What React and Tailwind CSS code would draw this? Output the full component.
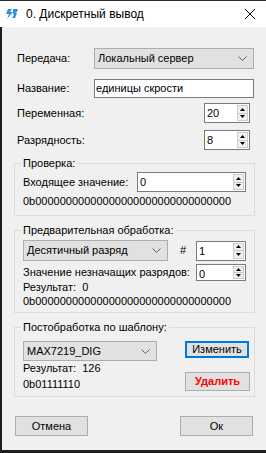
import React from 'react';

// WinForms-ish dialog "Дискретный вывод"
const font = "font-['Liberation_Sans',Arial,sans-serif]";

const Arrow = ({ up }) => (
  <svg width="5" height="3" viewBox="0 0 5 3">
    <path d={up ? 'M0 3 L2.5 0 L5 3 Z' : 'M0 0 L2.5 3 L5 0 Z'} fill="#000" />
  </svg>
);

const Spin = ({ value, className = '' }) => (
  <div className={`flex border border-[#7a7a7a] bg-white ${className}`}>
    <div className="flex-1 pl-[2px] leading-[18px]">{value}</div>
    <div className="my-[1px] mr-[1px] flex w-[11px] flex-col border border-[#cccccc] bg-[#f0f0f0]">
      <div className="flex flex-1 items-center justify-center border-b border-[#cccccc]">
        <Arrow up />
      </div>
      <div className="flex flex-1 items-center justify-center">
        <Arrow />
      </div>
    </div>
  </div>
);

const Select = ({ value, className = '' }) => (
  <div className={`flex items-center justify-between border border-[#adadad] bg-[#e1e1e1] pl-[3px] pr-[6px] ${className}`}>
    <span>{value}</span>
    <svg width="9" height="5" viewBox="0 0 9 5">
      <path d="M0.5 0.5 L4.5 4.5 L8.5 0.5" stroke="#606060" fill="none" />
    </svg>
  </div>
);

const Button = ({ children, className = '' }) => (
  <div className={`flex items-center justify-center bg-[#e1e1e1] ${className}`}>{children}</div>
);

const Group = ({ title, className = '', children }) => (
  <fieldset className={`ml-[12px] w-[241px] border border-[#dcdcdc] ${className}`}>
    <legend className="ml-[6px] px-[2px] leading-[13px]">{title}</legend>
    {children}
  </fieldset>
);

export default function App() {
  return (
    <div className={`${font} flex h-[453px] w-[266px] flex-col border-t border-[#2b2b2b] bg-[#f0f0f0] text-[11px] text-black`}>
      {/* title bar */}
      <div className="flex h-[26px] items-center bg-white">
        <svg width="14" height="12" viewBox="0 0 14 12" className="ml-[5px]">
          <path d="M3 1 L7 1 L5 4 L8 4 L2 11 L4 6 L1 6 Z" fill="#2f8fd8" />
          <path d="M8 1 L13 1 L12 4 L10 4 L12 5 L10 10 L7 10 L9 7 L8 6 Z" fill="#2f8fd8" />
        </svg>
        <span className="ml-[7px] text-[12px]">0. Дискретный вывод</span>
        <svg width="12" height="12" viewBox="0 0 12 12" className="ml-auto mr-[10px]">
          <path d="M1 1 L11 11 M11 1 L1 11" stroke="#000" strokeWidth="1" />
        </svg>
      </div>

      {/* body */}
      <div className="flex flex-1 flex-col border-b-[3px] border-l-2 border-[#1f1f1f]">
        <div className="mt-[21px] flex h-[21px] items-center">
          <span className="ml-[15px] w-[77px]">Передача:</span>
          <Select value="Локальный сервер" className="h-[21px] w-[160px]" />
        </div>

        <div className="mt-[10px] flex h-[19px] items-center">
          <span className="ml-[15px] w-[77px]">Название:</span>
          <div className="h-[19px] w-[160px] border border-[#7a7a7a] bg-white pl-[1px] leading-[17px]">
            единицы скрости
          </div>
        </div>

        <div className="mt-[5px] flex h-[20px] items-center">
          <span className="ml-[15px] w-[187px]">Переменная:</span>
          <Spin value="20" className="h-[20px] w-[46px]" />
        </div>

        <div className="mt-[7px] flex h-[20px] items-center">
          <span className="ml-[15px] w-[187px]">Разрядность:</span>
          <Spin value="8" className="h-[20px] w-[46px]" />
        </div>

        <Group title="Проверка:" className="mt-[7px]">
          <div className="pb-[7px] pl-[8px]">
            <div className="mt-[2px] flex h-[20px] items-center">
              <span className="w-[114px]">Входящее значение:</span>
              <Spin value="0" className="h-[20px] w-[109px]" />
            </div>
            <div className="mt-[3px] leading-[13px]">0b00000000000000000000000000000000</div>
          </div>
        </Group>

        <Group title="Предварительная обработка:" className="mt-[8px]">
          <div className="pb-[4px] pl-[8px]">
            <div className="mt-[3px] flex h-[21px] items-center">
              <Select value="Десятичный разряд" className="h-[21px] w-[145px]" />
              <span className="ml-[12px] w-[16px]">#</span>
              <Spin value="1" className="h-[20px] w-[50px]" />
            </div>
            <div className="mt-[3px] flex h-[17px] items-start">
              <span className="w-[173px] leading-[17px]">Значение незначащих разрядов:</span>
              <Spin value="0" className="h-[17px] w-[50px]" />
            </div>
            <div className="leading-[13px]">Результат:&nbsp; 0</div>
            <div className="mt-[1px] leading-[13px]">0b00000000000000000000000000000000</div>
          </div>
        </Group>

        <Group title="Постобработка по шаблону:" className="mt-[8px]">
          <div className="flex pb-[5px] pl-[8px]">
            <div className="flex w-[162px] flex-col">
              <Select value="MAX7219_DIG" className="mt-[7px] h-[20px] w-[134px]" />
              <div className="mt-[1px] leading-[13px]">Результат:&nbsp; 126</div>
              <div className="mt-[3px] leading-[13px]">0b01111110</div>
            </div>
            <div className="flex flex-col">
              <Button className="mt-[7px] h-[17px] w-[64px] border-2 border-[#0078d7]">Изменить</Button>
              <Button className="mt-[14px] h-[19px] w-[65px] border border-[#adadad] font-bold text-[#ff0000]">
                Удалить
              </Button>
            </div>
          </div>
        </Group>

        <div className="mt-[19px] flex">
          <Button className="ml-[13px] h-[20px] w-[73px] border border-[#adadad]">Отмена</Button>
          <Button className="ml-[92px] h-[20px] w-[73px] border border-[#adadad]">Ок</Button>
        </div>
      </div>
    </div>
  );
}
